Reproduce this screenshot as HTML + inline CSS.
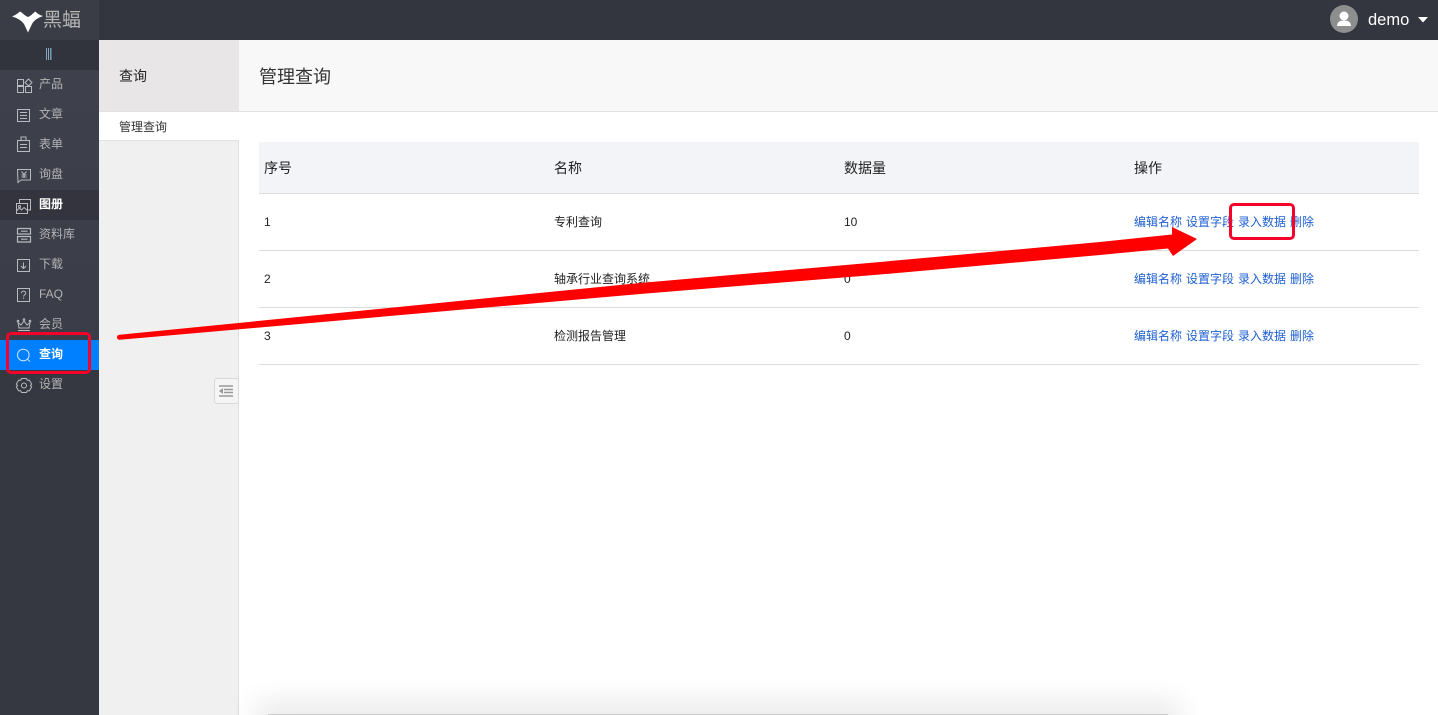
<!DOCTYPE html>
<html lang="zh"><head><meta charset="utf-8"><title>管理查询</title>
<style>
html,body{margin:0;padding:0;width:1438px;height:715px;overflow:hidden;background:#fff}
body{position:relative;font-family:"Liberation Sans","Noto Sans CJK SC",sans-serif;color:#333}
.a{position:absolute;white-space:nowrap}
.t{line-height:20px}
.nav{left:39px;font-size:12px;color:#b4b4b4;line-height:20px}
.lk{font-size:12px;color:#1d5fd0;line-height:20px}
.th{font-size:14px;color:#222;line-height:20px;top:158px}
.td{font-size:12px;color:#222;line-height:20px}
.ln{position:absolute;left:259px;width:1160px;height:1px;background:#dcdcdc}
</style></head><body>
<div class="a" style="left:0;top:0;width:1438px;height:40px;background:#33353f"></div>
<div class="a" style="left:0;top:0;width:99px;height:40px;background:#3a3d45"></div>
<div class="a" style="left:0;top:40px;width:99px;height:675px;background:#363841"></div>
<div class="a" style="left:0;top:70px;width:99px;height:300px;background:linear-gradient(#3e404c,#3a3c47)"></div>
<div class="a" style="left:0;top:40px;width:99px;height:30px;background:#31333d"></div>
<div class="a" style="left:0;top:190px;width:99px;height:30px;background:#33343e"></div>
<div class="a" style="left:0;top:340px;width:99px;height:30px;background:#0080fe"></div>

<svg class="a" style="left:0;top:0" width="99" height="60"><path d="M12 16.500C16 15 18 13 20 11.500C23 13 25 16 28 17C31 16 33 13 35.500 11.500C37 13 39 15 43 16C38 18 34 20 32 24L28 32.500L24 24C21 20 17 18 12 16.500Z" fill="#fff"/><rect x="46" y="48" width="1" height="13" fill="#7fa6c7"/><rect x="48" y="48" width="1" height="13" fill="#98a4b0"/><rect x="50" y="48" width="1.500" height="13" fill="#6f9fc0"/></svg>
<div class="a" style="left:43px;top:9px;font-size:19px;line-height:24px;color:#b5b5b5">黑蝠</div>

<svg class="a" style="left:0;top:0" width="99" height="400" fill="none" stroke="#b8babf" stroke-width="1">
<path d="M17.500 79.500h6v6h-6zM17.500 86.500h6v6h-6zM25.500 86.500h6v6h-6zM28.500 79l3.500 3.500-3.500 3.500-3.500-3.500z"/>
<path d="M17.500 109.500h12v12h-12zM20 112.500h7M20 115.500h7M20 118.500h7"/>
<path d="M17.500 140.500h12v11h-12zM21 140.500v-3.500h5v3.500M20 144.500h7M20 147.500h7"/>
<path d="M17.500 169.500h13v10.500h-9.500l-3 2.500zM21.500 171.500l2.500 3 2.500-3M24 174.500v3.500M21.500 175h5M21.500 177h5"/>
<path d="M19.500 203v-3.500h11v10.500h-3M16.500 203.500h11v10h-11zM16.500 211l3-3 2 2 2.500-2.500 3.500 3"/><circle cx="19.500" cy="206.500" r="1"/>
<path d="M17.500 228.500h13v5.500h-13zM17.500 236.500h13v5.500h-13zM21 231.200h6.500M21 239.200h6.500" stroke-width="1.200"/>
<path d="M17.500 259.500h12v12h-12zM23.500 262.500v6M21 266l2.500 2.500 2.500-2.500"/>
<path d="M17.500 288.500h12v13h-12z"/>
<path d="M21.500 293.200c0-2.800 4.200-2.800 4.200 0 0 1.700-2.100 1.700-2.100 3.300M23.600 297.500v1.300"/>
<path d="M18 330.500h12M19 328l-1-5.500 3 2.500 3-4 3 4 3-2.500-1 5.500z"/><circle cx="18" cy="321" r=".8"/><circle cx="24" cy="319.500" r=".8"/><circle cx="30" cy="321" r=".8"/>
<g stroke="#cfe6ff"><circle cx="23.300" cy="355" r="5.800"/><path d="M27.600 359.300l2.400 2.400"/></g>
<path stroke-linejoin="round" d="M21.500 379h5l.8 1.800 2-.2 2.400 4-1.200 1.400 1.200 1.400-2.400 4-2-.2-.8 1.800h-5l-.8-1.800-2 .2-2.400-4 1.200-1.400-1.200-1.400 2.400-4 2 .2z" transform="translate(0,-.5)"/><circle cx="24" cy="385.500" r="2.500"/>
</svg>

<div class="a nav" style="top:74px">产品</div>
<div class="a nav" style="top:104px">文章</div>
<div class="a nav" style="top:134px">表单</div>
<div class="a nav" style="top:164px">询盘</div>
<div class="a nav" style="top:194px;color:#fff;font-weight:bold">图册</div>
<div class="a nav" style="top:224px">资料库</div>
<div class="a nav" style="top:254px">下载</div>
<div class="a nav" style="top:284px">FAQ</div>
<div class="a nav" style="top:314px">会员</div>
<div class="a nav" style="top:344px;color:#fff;font-weight:bold">查询</div>
<div class="a nav" style="top:374px">设置</div>

<svg class="a" style="left:1330px;top:5px" width="28" height="28"><circle cx="14" cy="14" r="14" fill="#8e8e8e"/><circle cx="14" cy="11" r="4.500" fill="#fff"/><path d="M7 21c0-4 3-5.500 7-5.500s7 1.500 7 5.500z" fill="#fff"/></svg>
<div class="a" style="left:1368px;top:10px;font-size:16.500px;line-height:20px;color:#fff">demo</div>
<svg class="a" style="left:1418px;top:17px" width="11" height="7"><path d="M0 0h10L5 5.500z" fill="#fff"/></svg>

<div class="a" style="left:99px;top:40px;width:140px;height:675px;background:#f0f0f0;box-sizing:border-box;border-right:1px solid #dedede"></div>
<div class="a" style="left:99px;top:40px;width:140px;height:71px;background:#e8e6e6"></div>
<div class="a" style="left:239px;top:40px;width:1199px;height:71px;background:#f8f8f8"></div>
<div class="a" style="left:99px;top:111px;width:1339px;height:1px;background:#dfe1e4"></div>
<div class="a" style="left:99px;top:112px;width:140px;height:28px;background:#fff;border-bottom:1px solid #dfe1e4"></div>
<div class="a t" style="left:119px;top:66px;font-size:14px;color:#222">查询</div>
<div class="a" style="left:259px;top:65px;font-size:18px;line-height:24px;color:#333">管理查询</div>
<div class="a t" style="left:119px;top:117px;font-size:12px;color:#333">管理查询</div>

<div class="a" style="left:214px;top:378px;width:23px;height:24px;background:#f5f5f5;border:1px solid #d8d8d8;border-radius:3px"></div>
<svg class="a" style="left:0;top:0" width="240" height="400"><path d="M219 386h14M224 389.500h9M224 392.500h9M219 396h14" stroke="#999" stroke-width="1.500"/><path d="M223 388v6l-4-3z" fill="#999"/></svg>

<div class="a" style="left:259px;top:142px;width:1160px;height:51px;background:#f3f4f8"></div>
<div class="a" style="left:259px;top:193px;width:1160px;height:1px;background:#dcdee0"></div>
<div class="ln" style="top:250px"></div>
<div class="ln" style="top:307px"></div>
<div class="ln" style="top:364px"></div>

<div class="a th" style="left:264px">序号</div>
<div class="a th" style="left:554px">名称</div>
<div class="a th" style="left:844px">数据量</div>
<div class="a th" style="left:1134px">操作</div>

<div class="a td" style="left:264px;top:212px">1</div>
<div class="a td" style="left:554px;top:212px">专利查询</div>
<div class="a td" style="left:844px;top:212px">10</div>
<div class="a td" style="left:264px;top:269px">2</div>
<div class="a td" style="left:554px;top:269px">轴承行业查询系统</div>
<div class="a td" style="left:844px;top:269px">0</div>
<div class="a td" style="left:264px;top:326px">3</div>
<div class="a td" style="left:554px;top:326px">检测报告管理</div>
<div class="a td" style="left:844px;top:326px">0</div>

<div class="a lk" style="left:1134px;top:212px">编辑名称</div><div class="a lk" style="left:1186px;top:212px">设置字段</div><div class="a lk" style="left:1238px;top:212px">录入数据</div><div class="a lk" style="left:1290px;top:212px">删除</div>
<div class="a lk" style="left:1134px;top:269px">编辑名称</div><div class="a lk" style="left:1186px;top:269px">设置字段</div><div class="a lk" style="left:1238px;top:269px">录入数据</div><div class="a lk" style="left:1290px;top:269px">删除</div>
<div class="a lk" style="left:1134px;top:326px">编辑名称</div><div class="a lk" style="left:1186px;top:326px">设置字段</div><div class="a lk" style="left:1238px;top:326px">录入数据</div><div class="a lk" style="left:1290px;top:326px">删除</div>

<div class="a" style="left:230px;top:675px;width:975px;height:40px;overflow:hidden"><div style="position:absolute;left:38px;top:39px;width:900px;height:10px;background:#ccc;box-shadow:0 0 28px 12px rgba(0,0,0,.09)"></div></div>

<svg class="a" style="left:0;top:0" width="1438" height="715">
<path d="M119.500 334.800L640 283L880 262L1100 242L1172 234.500L1172 227L1197 239L1173 256L1168 248.500L1100 255L880 274.500L640 294L119.500 339.800A2.500 2.500 0 0 1 119.500 334.800Z" fill="#fe0000"/>
</svg>
<div class="a" style="left:6px;top:332px;width:79px;height:36px;border:3px solid #f5022a;border-radius:5px"></div>
<div class="a" style="left:1229px;top:203px;width:60px;height:31px;border:3px solid #f5022a;border-radius:5px"></div>
</body></html>
